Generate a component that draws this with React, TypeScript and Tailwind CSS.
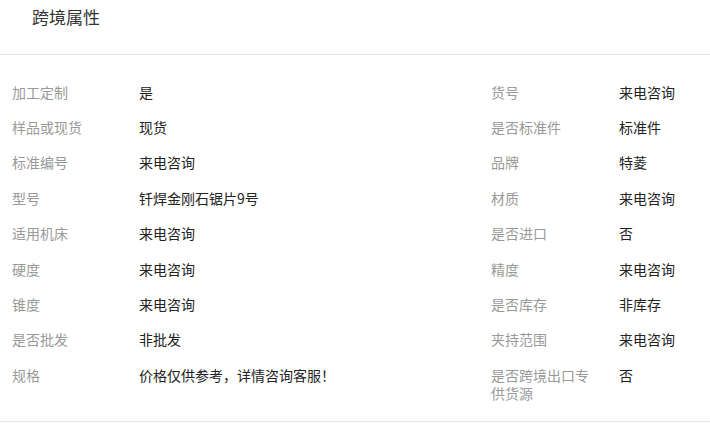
const rows: [string, string, string, string][] = [
  ['加工定制', '是', '货号', '来电咨询'],
  ['样品或现货', '现货', '是否标准件', '标准件'],
  ['标准编号', '来电咨询', '品牌', '特菱'],
  ['型号', '钎焊金刚石锯片9号', '材质', '来电咨询'],
  ['适用机床', '来电咨询', '是否进口', '否'],
  ['硬度', '来电咨询', '精度', '来电咨询'],
  ['锥度', '来电咨询', '是否库存', '非库存'],
  ['是否批发', '非批发', '夹持范围', '来电咨询'],
  ['规格', '价格仅供参考，详情咨询客服！', '是否跨境出口专供货源', '否'],
];

const App = () => {
  return (
    <div
      className="w-[710px] h-[423px] bg-white overflow-hidden"
      style={{ fontFamily: '"Noto Sans CJK SC", "Microsoft YaHei", sans-serif' }}
    >
      {/* Header */}
      <div className="h-[55px] border-b border-[#e8e8e8] pl-[32px] pt-[5px]">
        <h2 className="text-[17px] leading-[24px] text-[#333]">跨境属性</h2>
      </div>

      {/* Attribute table */}
      <div className="grid grid-cols-[127px_352px_128px_1fr] pl-[12px] pt-[19px] pb-[11px] border-b border-[#e8e8e8] text-[14px] leading-[18px]">
        {rows.map(([l1, v1, l2, v2], i) => (
          <div key={i} className="contents">
            <div className="py-[8.7px] text-[#999]">{l1}</div>
            <div className="py-[8.7px] text-[#222]">{v1}</div>
            <div className="py-[8.7px] pr-[22px] text-[#999]">{l2}</div>
            <div className="py-[8.7px] text-[#222]">{v2}</div>
          </div>
        ))}
      </div>
    </div>
  );
};

export default App;
